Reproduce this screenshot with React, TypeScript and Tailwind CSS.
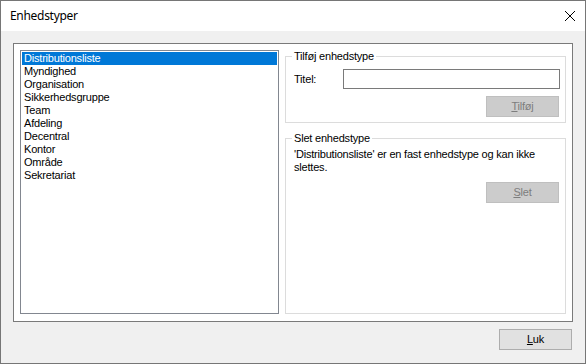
import React from 'react';

const enhedstyper = [
  'Distributionsliste',
  'Myndighed',
  'Organisation',
  'Sikkerhedsgruppe',
  'Team',
  'Afdeling',
  'Decentral',
  'Kontor',
  'Område',
  'Sekretariat',
];

interface GroupBoxProps {
  title: string;
  className?: string;
  children?: React.ReactNode;
}

const GroupBox: React.FC<GroupBoxProps> = ({ title, className = '', children }) => (
  <div className={`flex flex-col border border-[#dcdcdc] ${className}`}>
    <div className="-mt-[7px] ml-[6px] w-fit bg-white px-[2px] leading-[13px]">{title}</div>
    {children}
  </div>
);

const App: React.FC = () => {
  const selected = 0;

  return (
    <div className="flex h-[364px] w-[586px] flex-col border border-[#767676] bg-[#f0f0f0] font-['Liberation_Sans',Arial,sans-serif] text-[11px] tracking-[-0.2px] text-black">
      {/* Title bar */}
      <div className="flex h-[30px] items-center justify-between bg-white">
        <span className="pl-[9px] font-['Noto_Sans',sans-serif] text-[12px] tracking-[-0.3px]">Enhedstyper</span>
        <svg width="10" height="10" viewBox="0 0 10 10" className="mr-[10px]">
          <path d="M0 0 L10 10 M10 0 L0 10" stroke="#000" strokeWidth="1" />
        </svg>
      </div>

      <div className="flex flex-1 flex-col px-[12px] pt-[12px]">
        {/* Main panel */}
        <div className="flex h-[279px] gap-[6px] border border-[#7a7a7a] bg-white px-[6px] pt-[6px] pb-[7px]">
          {/* List */}
          <div className="w-[259px] border border-[#828790] p-[1px]">
            {enhedstyper.map((item, index) => (
              <div
                key={item}
                className={`h-[13px] pl-[2px] leading-[13px] ${index === selected ? 'bg-[#0078d7] text-white' : ''}`}
              >
                {item}
              </div>
            ))}
          </div>

          <div className="mt-[6px] flex flex-1 flex-col">
            <GroupBox title="Tilføj enhedstype" className="h-[67px]">
              <div className="mt-[6px] flex items-center pl-[8px] pr-[5px]">
                <span className="w-[49px]">Titel:</span>
                <div className="h-[20px] flex-1 border border-[#7a7a7a] bg-white" />
              </div>
              <button
                disabled
                className="mt-[7px] mr-[6px] h-[21px] w-[73px] self-end border border-[#bfbfbf] bg-[#cccccc] text-[#7d7d7d]"
              >
                <span className="underline">T</span>ilføj
              </button>
            </GroupBox>

            <GroupBox title="Slet enhedstype" className="mt-[15px] flex-1">
              <p className="mt-[3px] pl-[8px] pr-[6px] leading-[13px]">
                'Distributionsliste' er en fast enhedstype og kan ikke slettes.
              </p>
              <button
                disabled
                className="mt-[8px] mr-[6px] h-[21px] w-[73px] self-end border border-[#bfbfbf] bg-[#cccccc] text-[#7d7d7d]"
              >
                <span className="underline">S</span>let
              </button>
            </GroupBox>
          </div>
        </div>

        <div className="mt-[7px] flex justify-end">
          <button className="mr-[1px] h-[21px] w-[73px] border border-[#adadad] bg-[#e1e1e1]">
            <span className="underline">L</span>uk
          </button>
        </div>
      </div>
    </div>
  );
};

export default App;
